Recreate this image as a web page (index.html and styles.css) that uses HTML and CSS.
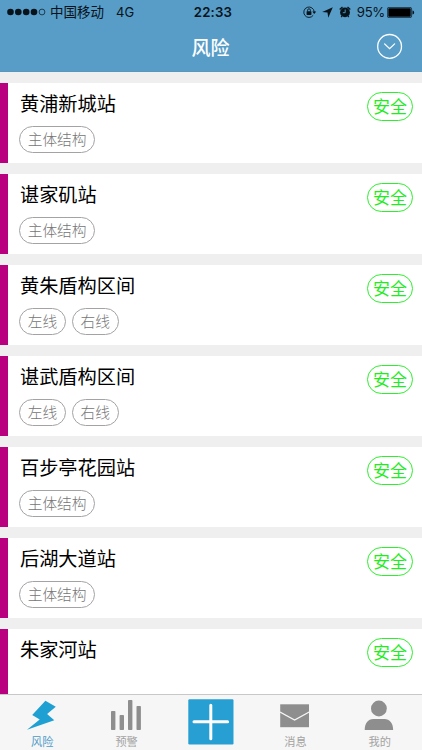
FILE: index.html
```html
<!DOCTYPE html>
<html lang="zh-CN">
<head>
<meta charset="utf-8">
<title>风险</title>
<link rel="stylesheet" href="styles.css">
</head>
<body>
<div class="app">
  <header class="header">
    <div class="status">
      <div class="status-left">
        <svg class="signal" width="39" height="8" viewBox="0 0 39 8"><circle cx="3.5" cy="4" r="3.3"/><circle cx="11.3" cy="4" r="3.3"/><circle cx="19.2" cy="4" r="3.3"/><circle cx="27" cy="4" r="3.3"/><circle cx="35" cy="4" r="2.9" fill="none" stroke="#07131b" stroke-width=".7"/></svg>
        <span class="carrier">中国移动</span>
        <span class="network">4G</span>
      </div>
      <time class="clock">22:33</time>
      <div class="status-right">
        <svg class="lock" width="14" height="12" viewBox="0 0 14 12"><path d="M10.2 9.3A5.2 5.2 0 1 1 11.2 6" fill="none" stroke="#07131b" stroke-width=".9"/><path d="M9.3 5.5h3.9L11.2 8z"/><rect x="3.6" y="5.2" width="4.8" height="3.7" rx=".4"/><path d="M4.6 5.5V4.2a1.4 1.4 0 0 1 2.8 0v1.3" fill="none" stroke="#07131b" stroke-width=".9"/></svg>
        <svg class="location" width="11" height="11" viewBox="0 0 10 10"><path d="M9.8.2 5.7 9.8 5 5.1.2 4.6z"/></svg>
        <svg class="alarm" width="12" height="12" viewBox="0 0 12 12"><circle cx="6" cy="6.4" r="4.9"/><path d="M.7 3.6 3.5 1M8.5 1l2.8 2.6M3 10l-.8 1M9 10l.8 1" fill="none" stroke="#07131b" stroke-width="1.3"/><path d="M6.2 3.5v3.2H3.8" fill="none" stroke="#579dc8" stroke-width=".9"/></svg>
        <span class="percent">95%</span>
        <svg class="battery" width="28" height="11" viewBox="0 0 28 11"><rect x=".4" y=".4" width="24.2" height="10.2" rx="1.5" fill="none" stroke="#07131b" stroke-width=".7"/><rect x="1.3" y="1.3" width="22.4" height="8.4" rx=".6" fill="#000"/><path d="M25.5 3.4c2.2.7 2.2 3.5 0 4.2z"/></svg>
      </div>
    </div>
    <div class="navbar">
      <h1 class="heading">风险</h1>
      <svg class="expand" width="26" height="26" viewBox="0 0 26 26" fill="none" stroke="#fff" stroke-width="1.3"><circle cx="12.6" cy="13.4" r="11.9"/><path d="m7.6 10.9 5 4.8 5-4.8" stroke-linecap="round"/></svg>
    </div>
  </header>

  <main class="list">
    <section class="card"><div class="info"><h2 class="name">黄浦新城站</h2><div class="tags"><span class="tag">主体结构</span></div></div><span class="badge">安全</span></section>
    <section class="card"><div class="info"><h2 class="name">谌家矶站</h2><div class="tags"><span class="tag">主体结构</span></div></div><span class="badge">安全</span></section>
    <section class="card"><div class="info"><h2 class="name">黄朱盾构区间</h2><div class="tags"><span class="tag">左线</span><span class="tag">右线</span></div></div><span class="badge">安全</span></section>
    <section class="card"><div class="info"><h2 class="name">谌武盾构区间</h2><div class="tags"><span class="tag">左线</span><span class="tag">右线</span></div></div><span class="badge">安全</span></section>
    <section class="card"><div class="info"><h2 class="name">百步亭花园站</h2><div class="tags"><span class="tag">主体结构</span></div></div><span class="badge">安全</span></section>
    <section class="card"><div class="info"><h2 class="name">后湖大道站</h2><div class="tags"><span class="tag">主体结构</span></div></div><span class="badge">安全</span></section>
    <section class="card"><div class="info"><h2 class="name">朱家河站</h2></div><span class="badge">安全</span></section>
  </main>

  <nav class="tabbar">
    <a class="tab active"><svg width="30" height="32" viewBox="0 0 30 32"><path d="M18.4.8 28.8 6.8 20.1 13.9 27.3 20.3 0 29.8 12.7 19.6 5.2 15z" fill="#1fa0d3"/></svg><span class="label">风险</span></a>
    <a class="tab"><svg width="31" height="32" viewBox="0 0 31 32" fill="#8e8e8e"><rect y="11" width="4.4" height="19" rx=".8"/><rect x="8.6" y="15" width="4.4" height="15" rx=".8"/><rect x="17" width="4.4" height="30" rx=".8"/><rect x="25.5" y="6" width="4.4" height="24" rx=".8"/></svg><span class="label">预警</span></a>
    <a class="tab add"><svg width="46" height="46" viewBox="0 0 46 46"><rect x=".3" y=".3" width="45.2" height="45.2" rx="1.2" fill="#289fd3"/><path d="M22.8 6.2v33.6M6 22.8h33.6" stroke="#fff" stroke-width="3" stroke-linecap="round"/></svg></a>
    <a class="tab"><svg width="30" height="32" viewBox="0 0 30 32"><path d="M.2 4.3H29v22.9H.2z" fill="#8e8e8e"/><path d="m0 12 14.6 8 14.6-8" fill="none" stroke="#f6f6f6" stroke-width="1.4"/></svg><span class="label">消息</span></a>
    <a class="tab"><svg width="31" height="32" viewBox="0 0 31 32" fill="#8e8e8e"><circle cx="14.9" cy="8.5" r="7.9"/><path d="M.7 30c0-7 3.5-11 8.5-11h11.4c5 0 8.5 4 8.5 11z"/></svg><span class="label">我的</span></a>
  </nav>
</div>
</body>
</html>
```
FILE: styles.css
```css
* {
  box-sizing: border-box;
}

body {
  margin: 0;
  font-family: "Noto Sans CJK SC", sans-serif;
}

.app {
  display: flex;
  flex-direction: column;
  width: 422px;
  height: 750px;
  overflow: hidden;
  background: #efefef;
}

.header {
  flex: none;
  height: 72.4px;
  background: #579dc8;
  border-bottom: 1px solid #5a97bc;
}

.status {
  display: grid;
  grid-template-columns: 1fr auto 1fr;
  align-items: center;
  height: 24px;
  padding: 0 7px;
  color: #07131b;
  font-family: Inter, "Noto Sans CJK SC", sans-serif;
  font-size: 13px;
  line-height: 24px;
  fill: #07131b;
}

.status-left,
.status-right {
  display: flex;
  align-items: center;
}

.status-right {
  justify-content: flex-end;
}

.carrier {
  margin-left: 4px;
  font-size: 13.5px;
}

.network {
  margin-left: 12px;
}

.clock {
  padding-left: 4px;
  font-size: 13.2px;
  font-weight: 600;
  letter-spacing: .2px;
}

.location {
  margin-left: 5px;
}

.alarm {
  margin-left: 6px;
}

.percent {
  margin: 0 2px 0 6px;
  font-size: 13.2px;
  letter-spacing: -.3px;
}

.navbar {
  display: grid;
  grid-template-columns: 1fr auto 1fr;
  align-items: center;
  height: 46px;
  padding: 0 19px 0 18px;
}

.heading {
  grid-column: 2;
  margin: 0;
  color: #fff;
  font-size: 19px;
  font-weight: 500;
  line-height: 28px;
}

.expand {
  justify-self: end;
  position: relative;
  top: -1px;
}

.list {
  display: flex;
  flex: 1;
  flex-direction: column;
  gap: 11px;
  min-height: 0;
  padding-top: 11px;
  overflow: hidden;
}

.card {
  display: flex;
  flex: none;
  justify-content: space-between;
  height: 80px;
  padding: 9px 9px 0 11px;
  background: #fff;
  border-left: 8px solid #b9007f;
}

.name {
  margin: -3px 0 9px 1px;
  color: #000;
  font-size: 19.2px;
  font-weight: 400;
  line-height: 28px;
}

.tags {
  display: flex;
  gap: 6px;
}

.tag {
  height: 27px;
  padding: 0 7.7px;
  border: 1px solid #a3a3a3;
  border-radius: 14px;
  color: #757575;
  font-size: 14.7px;
  font-weight: 300;
  line-height: 24px;
}

.badge {
  width: 46px;
  height: 29px;
  border: 1.5px solid #2cf02c;
  border-radius: 15px;
  color: #1fed1f;
  font-size: 17px;
  line-height: 26px;
  text-align: center;
}

.tabbar {
  display: grid;
  flex: none;
  grid-template-columns: repeat(5, 1fr);
  height: 56px;
  background: #f6f6f6;
  border-top: 1px solid #c8c8c8;
}

.tab {
  display: flex;
  flex-direction: column;
  align-items: center;
  padding-top: 5px;
  color: #a3a3a3;
}

.add {
  padding-top: 4px;
}

.active {
  color: #4b9ac9;
}

.label {
  font-size: 11.2px;
  line-height: 19px;
}
```
